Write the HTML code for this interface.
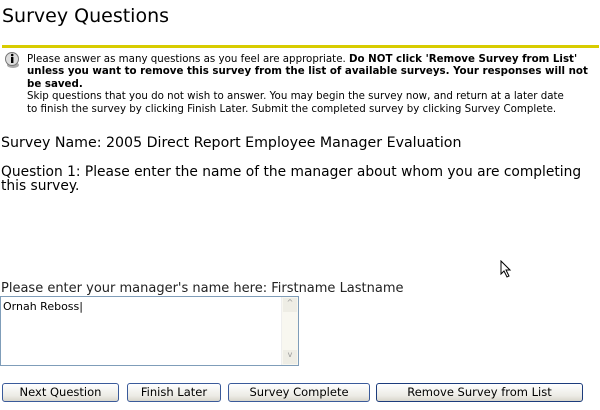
<!DOCTYPE html>
<html><head><style>
body{margin:0;width:600px;height:410px;background:#fff;font-family:"DejaVu Sans","Liberation Sans",sans-serif;color:#000;position:relative;overflow:hidden}
.a{position:absolute;white-space:nowrap}
.t{left:2px;top:5px;font-size:19px;font-family:"DejaVu Sans",sans-serif}
.bar{position:absolute;left:2px;top:45px;width:597px;height:3px;background:#d8cc00}
.n{font-size:10.25px;line-height:12.4px;left:27px;top:53px}
.m{font-size:14px}
.btn{position:absolute;top:383px;height:17px;border:1px solid #3a5a9a;border-radius:3px;background:linear-gradient(#fff,#ecebe5 70%,#d8d6cc);font-size:11.5px;text-align:center;line-height:17px;font-family:"DejaVu Sans",sans-serif}
</style></head><body>
<div class="a t">Survey Questions</div>
<div class="bar"></div>
<svg class="a" style="left:3px;top:52px" width="20" height="18" viewBox="0 0 20 18"><ellipse cx="10" cy="13" rx="6" ry="3" fill="#aaa"/><circle cx="9" cy="7" r="6.5" fill="#ddd" stroke="#777"/><rect x="8" y="5" width="2.4" height="6" fill="#000"/><circle cx="9.2" cy="3" r="1.3" fill="#000"/></svg>
<div class="a n">Please answer as many questions as you feel are appropriate. <b>Do NOT click 'Remove Survey from List'</b><br><b>unless you want to remove this survey from the list of available surveys. Your responses will not</b><br><b>be saved.</b><br>Skip questions that you do not wish to answer. You may begin the survey now, and return at a later date<br>to finish the survey by clicking Finish Later. Submit the completed survey by clicking Survey Complete.</div>
<div class="a m" style="left:1px;top:135px;font-size:14.2px">Survey Name: 2005 Direct Report Employee Manager Evaluation</div>
<div class="a m" style="left:1px;top:166px;line-height:13.5px;font-size:13.8px">Question 1: Please enter the name of the manager about whom you are completing<br>this survey.</div>
<svg class="a" style="left:500px;top:260px" width="12" height="18"><path d="M1 1V14L4 11L7 17L9 16L6 10H10Z" fill="#fff" stroke="#000"/></svg>
<div class="a" style="left:1px;top:281px;font-size:13px;color:#222">Please enter your manager's name here: Firstname Lastname</div>
<div class="a" style="left:0;top:296px;width:297px;height:68px;border:1px solid #7f9db9;background:#fff">
<div class="a" style="left:2px;top:3px;font-size:11px">Ornah Reboss|</div>
<div class="a" style="right:0;top:0;width:16px;height:68px;background:#f8f7f0;border-left:1px solid #eee"></div>
<div class="a" style="right:1px;top:1px;width:14px;height:14px;background:#eeede5;font-size:8px;color:#999;text-align:center">^</div>
<div class="a" style="right:1px;bottom:1px;width:14px;height:14px;background:#eeede5;font-size:8px;color:#999;text-align:center">v</div>
</div>
<div class="btn" style="left:2px;width:115px">Next Question</div>
<div class="btn" style="left:127px;width:92px">Finish Later</div>
<div class="btn" style="left:228px;width:140px">Survey Complete</div>
<div class="btn" style="left:376px;width:205px;border-color:#1c3c7c">Remove Survey from List</div>
</body></html>
